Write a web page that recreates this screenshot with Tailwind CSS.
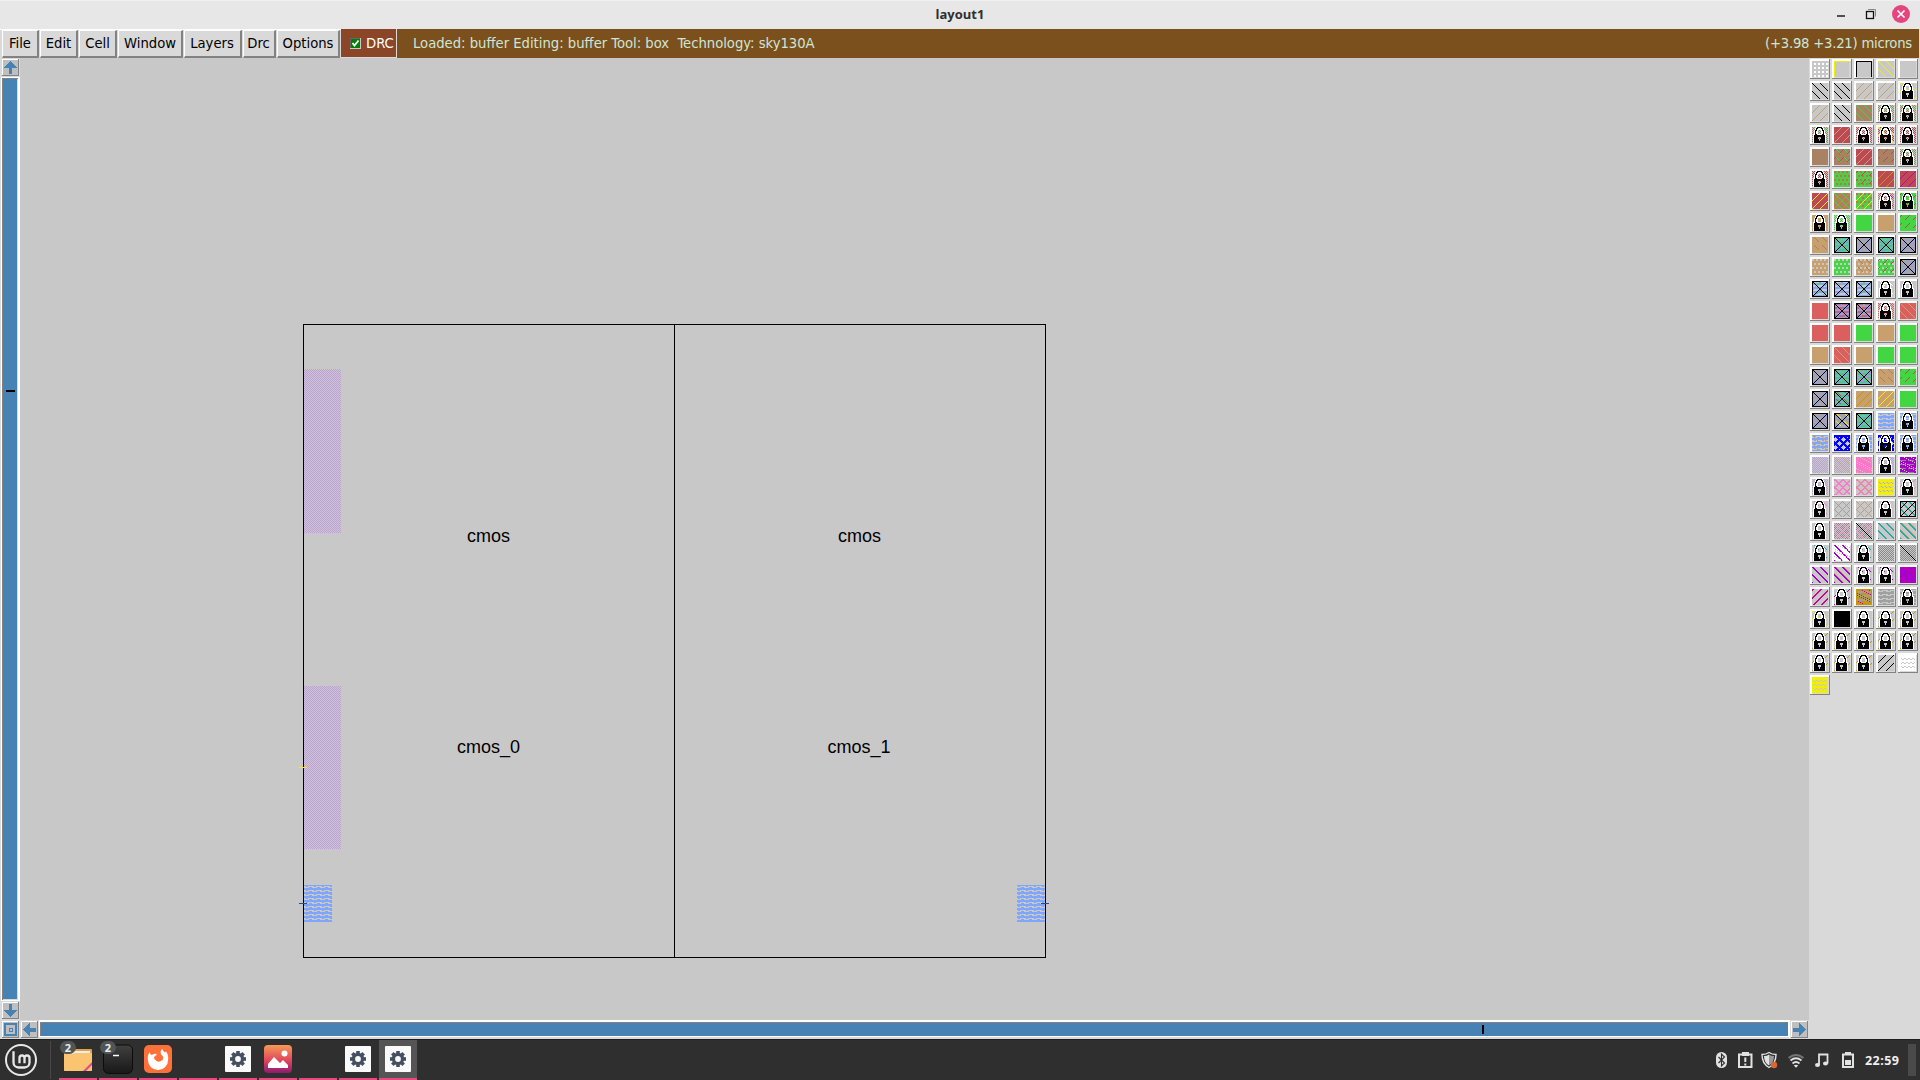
<!DOCTYPE html>
<html lang="en">
<head>
<meta charset="utf-8">
<title>layout1</title>
<script src="https://cdn.jsdelivr.net/npm/@tailwindcss/browser@4"></script>
</head>
<body class="w-[1920px] h-[1080px] overflow-hidden flex flex-col bg-[#d9d9d9] font-['DejaVu_Sans_Condensed','DejaVu_Sans',sans-serif] font-stretch-condensed text-black">

<!-- window title -->
<header class="h-[29px] shrink-0 bg-[#e7e7e7] border-t border-[#f0f0f0] grid grid-cols-[1fr_auto_1fr] items-center">
  <span></span>
  <h1 class="font-['Open_Sans','Noto_Sans',sans-serif] font-bold text-[13px] leading-none text-[#303030] font-stretch-normal pb-[2px]">layout1</h1>
  <svg class="justify-self-end" width="90" height="28" viewBox="1830 1 90 28">
    <path d="M1837 16h8" stroke="#111" stroke-width="1.4"/>
    <path d="M1868 9.5h7.5v7" fill="none" stroke="#888" stroke-width="1"/>
    <rect x="1866.5" y="11.500" width="7" height="7" fill="none" stroke="#111" stroke-width="1.3"/>
    <circle cx="1901" cy="14" r="9" fill="#e5457f"/>
    <path d="M1897.500 10.500l7 7m0-7l-7 7" stroke="#fff" stroke-width="1.600"/>
  </svg>
</header>

<!-- menu bar -->
<nav class="h-[29px] shrink-0 flex bg-[#7b501d] text-[14.67px] leading-none" id="bar">
  <div class="flex bg-[#d9d9d9] pl-[2px] gap-px pr-px border-t border-white">
    <button class="w-[37px] h-7 border-l border-t border-l-white border-t-white border-r-2 border-b-2 border-r-[#828282] border-b-[#828282]">File</button>
    <button class="w-[38px] h-7 border-l border-t border-l-white border-t-white border-r-2 border-b-2 border-r-[#828282] border-b-[#828282]">Edit</button>
    <button class="w-[38px] h-7 border-l border-t border-l-white border-t-white border-r-2 border-b-2 border-r-[#828282] border-b-[#828282]">Cell</button>
    <button class="w-[65px] h-7 border-l border-t border-l-white border-t-white border-r-2 border-b-2 border-r-[#828282] border-b-[#828282]">Window</button>
    <button class="w-[58px] h-7 pr-px border-l border-t border-l-white border-t-white border-r-2 border-b-2 border-r-[#828282] border-b-[#828282]">Layers</button>
    <button class="w-[33px] h-7 pr-px border-l border-t border-l-white border-t-white border-r-2 border-b-2 border-r-[#828282] border-b-[#828282]">Drc</button>
    <button class="w-[63px] h-7 border-l border-t border-l-white border-t-white border-r-2 border-b-2 border-r-[#828282] border-b-[#828282]">Options</button>
  </div>
  <div class="w-14 flex items-center bg-[#8b4527] text-white border-r border-b border-[#d9d9d9] pl-[9px] gap-[5px]">
    <svg width="11" height="11" viewBox="0 0 11 11"><rect width="11" height="11" fill="#c8c8c8"/><rect width="10" height="10" fill="#666"/><rect x="1" y="1" width="9" height="9" fill="#008000"/><path d="M2.500 5l2 2.500 4-5" fill="none" stroke="#fff" stroke-width="1.800"/></svg>
    <span>DRC</span>
  </div>
  <div class="flex-1 flex items-center justify-between pl-4 pr-[7px] text-[#cfe5d8] whitespace-pre border-r border-[#d9d9d9]"><span>Loaded: buffer Editing: buffer Tool: box  Technology: sky130A</span><span class="tracking-[-0.22px]">(+3.98 +3.21) microns</span></div>
</nav>

<main class="flex-1 min-h-0 flex">
  <div class="w-[1809px] grid grid-cols-[20px_1789px] grid-rows-[962px_19px]">
    <!-- vertical scrollbar -->
    <div class="bg-[#d9d9d9]">
      <svg class="block" width="20" height="962" viewBox="0 58 20 962" shape-rendering="crispEdges">
        <path d="M2 59h17v17h-17z" fill="#828282"/><path d="M2 59h16v16h-16z" fill="#fff"/><path d="M3 60h15v15h-15z" fill="#bfbfbf"/>
        <path d="M10 61l7 7h-5v6h-3v-6h-5z" fill="#4682b4"/>
        <path d="M1 77h19v924h-19z" fill="#fff"/><path d="M2 78h16v922h-16z" fill="#828282"/><path d="M3 79h15v920h-15z" fill="#4682b4"/><path d="M17 79h1v921h-15v-1h14z" fill="#d9d9d9"/>
        <path d="M6 390h9v2h-9z" fill="#000"/>
        <path d="M2 1002h17v17h-17z" fill="#828282"/><path d="M2 1002h16v16h-16z" fill="#fff"/><path d="M3 1003h15v15h-15z" fill="#bfbfbf"/>
        <path d="M10 1017l7-7h-5v-6h-3v6h-5z" fill="#4682b4"/>
      </svg>
    </div>
    <!-- layout canvas -->
    <svg class="block bg-[#c8c8c8] font-['Liberation_Sans',Arial,sans-serif] text-[18px]" width="1789" height="962" viewBox="20 58 1789 962">
      <defs>
        <pattern id="dith" width="2" height="2" patternUnits="userSpaceOnUse"><path d="M0 0h1v1h-1zM1 1h1v1h-1z" fill="#c29ee0" shape-rendering="crispEdges"/></pattern>
        <pattern id="brick" x="304" y="885" width="8" height="4" patternUnits="userSpaceOnUse"><path d="M0 0h8v1h-8zM2 1h2v1h-2zM5 2h3v1h-3zM0 3h8v1h-8z" fill="#7fa6ff" shape-rendering="crispEdges"/></pattern>
      </defs>
      <g shape-rendering="crispEdges">
        <path d="M304 369h37v164h-37zM304 686h37v163h-37z" fill="url(#dith)"/>
        <path d="M304 885h28v37h-28zM1017 885h28v37h-28z" fill="url(#brick)"/>
        <path d="M303 324h743v1h-743zM303 957h743v1h-743zM303 324h1v633h-1zM674 324h1v633h-1zM1045 324h1v633h-1z" fill="#000"/>
        <path d="M299 767h8v1h-8z" fill="#f5f000"/>
        <path d="M299 903h8v1h-8zM1041 903h8v1h-8z" fill="#1f4f9c"/>
      </g>
      <g text-anchor="middle"><text x="488.500" y="542">cmos</text><text x="859.500" y="542">cmos</text><text x="488.500" y="753">cmos_0</text><text x="859" y="753">cmos_1</text></g>
    </svg>
    <!-- horizontal scrollbar -->
    <svg class="block col-span-2" width="1809" height="19" viewBox="0 1020 1809 19" shape-rendering="crispEdges">
      <path d="M0 1020h1809v19h-1809z" fill="#d9d9d9"/>
      <path d="M2 1021h17v17h-17z" fill="#828282"/><path d="M2 1021h16v16h-16z" fill="#fff"/><path d="M3 1022h15v15h-15z" fill="#bfbfbf"/>
      <path d="M5 1024h11v11h-11z" fill="none" stroke="#4682b4" stroke-width="2"/><path d="M9 1028h3v3h-3z" fill="#bfbfbf" stroke="#4682b4"/>
      <path d="M21 1021h17v17h-17z" fill="#828282"/><path d="M21 1021h16v16h-16z" fill="#fff"/><path d="M22 1022h15v15h-15z" fill="#bfbfbf"/>
      <path d="M23 1029.500l7-7v5h6v4h-6v5z" fill="#4682b4"/>
      <path d="M39 1020h1751v18h-1751z" fill="#fff"/><path d="M40 1022h1748v14h-1748z" fill="#828282"/><path d="M41 1023h1747v13h-1747z" fill="#4682b4"/><path d="M39 1037h1750v1h-1750z" fill="#d9d9d9"/>
      <path d="M1482 1025h2v9h-2z" fill="#000"/>
      <path d="M1791 1021h17v17h-17z" fill="#828282"/><path d="M1791 1021h16v16h-16z" fill="#fff"/><path d="M1792 1022h15v15h-15z" fill="#bfbfbf"/>
      <path d="M1806 1029.500l-7-7v5h-6v4h6v5z" fill="#4682b4"/>
    </svg>
  </div>
  <!-- layer palette -->
  <aside id="palette" class="w-[111px] pl-px pt-px grid grid-cols-[repeat(5,20px)] auto-rows-[20px] gap-[2px] content-start"></aside>
</main>

<!-- desktop panel -->
<footer class="h-[41px] shrink-0 bg-[#2f2f2f] border-t border-[#1d1d1d] flex justify-between">
  <svg width="420" height="40" viewBox="0 1040 420 40">
    <defs>
      <linearGradient id="pic" x2="0" y2="1"><stop stop-color="#f59a56"/><stop offset=".55" stop-color="#e0475c"/><stop offset="1" stop-color="#8e1a70"/></linearGradient>
      <linearGradient id="term" x2="0" y2="1"><stop stop-color="#404040"/><stop offset="1" stop-color="#181818"/></linearGradient>
      <g id="gear"><rect width="26" height="26" rx="1" fill="#fafafa"/><g transform="translate(13 13)" fill="#454f61"><circle r="6.200"/><path id="t" d="M-1.800-8h3.600v16h-3.600z"/><use href="#t" transform="rotate(45)"/><use href="#t" transform="rotate(90)"/><use href="#t" transform="rotate(135)"/><circle r="2.900" fill="#fafafa"/></g></g>
    </defs>
    <circle cx="21" cy="1060" r="15" fill="none" stroke="#e8e8e8" stroke-width="2"/>
    <path d="M13.500 1052.500v10a5 5 0 0 0 5 5h6a5 5 0 0 0 5-5v-4.500a2.500 2.500 0 0 0-5 0v4m0-4a2.500 2.500 0 0 0-5 0v4" fill="none" stroke="#e8e8e8" stroke-width="2.300" stroke-linecap="square"/>
    <path d="M50.500 1041v38" stroke="#484848"/>
    <path d="M64 1050q0-1 1-1h26q1 0 1 1v20q0 1-1 1h-26q-1 0-1-1z" fill="#e1a049"/><path d="M66 1051h24v4h-24z" fill="#eee"/><path d="M64 1054h9l2-1h17v17q0 1-1 1h-26q-1 0-1-1z" fill="#fac470"/><path d="M83 1071l9-9v3l-6 6z" fill="#e8468a"/>
    <rect x="103.500" y="1045" width="29" height="28.500" rx="5" fill="url(#term)" stroke="#0c0c0c"/><path d="M108 1052l2 1.500M113 1055.500h6" stroke="#fff" stroke-width="1.300"/>
    <rect x="144" y="1045" width="28" height="28" rx="5" fill="#ff7139"/>
    <path d="M150 1052q0 3 2 3 2-2 5-1-1 2-3 3 0 3 3 3.500 3 1 5-1 1-3-1-5-1-3 1-6 1 3 3 4l1-1q3 4 2 9a10 9.500 0 0 1-20 0q-1-5 2-8.500z" fill="#fff"/><path d="M155 1059q2 4 6 2 4-2 1-6-2-1-3 0 2 2 0 4-2 1-4 0z" fill="#ff7139"/>
    <use href="#gear" x="225" y="1046"/>
    <rect x="264" y="1045" width="28" height="28" rx="4" fill="url(#pic)"/><circle cx="284.500" cy="1053.500" r="3" fill="#fff"/><path d="M268 1068v-4l6-7 6 6 3-3 5 5v3z" fill="#fff"/>
    <use href="#gear" x="345" y="1046"/>
    <path d="M379 1040h38v40h-38z" fill="#555"/>
    <use href="#gear" x="385" y="1046"/>
    <g fill="#505558"><rect x="60" y="1041" width="16" height="13" rx="6.500"/><rect x="100" y="1041" width="16" height="13" rx="6.500"/></g>
    <g class="font-['Noto_Sans',sans-serif] text-[11px] font-bold font-stretch-normal" fill="#e4ecef" text-anchor="middle"><text x="68" y="1051.500">2</text><text x="108" y="1051.500">2</text></g>
    <path d="M59 1078h38v2h-38zM99 1078h38v2h-38zM139 1078h38v2h-38zM179 1078h38v2h-38zM219 1078h38v2h-38zM259 1078h38v2h-38zM299 1078h38v2h-38zM339 1078h38v2h-38zM379 1078h38v2h-38z" fill="#e54980"/>
  </svg>
  <svg width="220" height="40" viewBox="1700 1040 220 40" fill="none" stroke="#e2e2e2">
    <rect x="1716" y="1052" width="11" height="16" rx="5.500" fill="#e2e2e2" stroke="none"/><path d="M1718.500 1057l6 6-3 3v-12l3 3-6 6" stroke="#2f2f2f" stroke-width="1.100"/>
    <path d="M1739 1054.500h12.500v12.500h-12.500z" stroke-width="2"/><path d="M1742 1052h7v4h-7z" fill="#e2e2e2" stroke="none"/><path d="M1745.300 1057.500v4.500m0 1.500v2" stroke-width="2"/>
    <path d="M1769 1052.500q3 2 7 2 0 9-7 13-7-4-7-13 4 0 7-2z" stroke-width="1.400"/><path d="M1769 1054.500v11q-5-3-5-9.500 3 0 5-1.500z" fill="#e2e2e2" stroke="none"/><path d="M1769 1054.500v11q5-3 5-9.500-3 0-5-1.500z" fill="#999" stroke="none"/><circle cx="1774" cy="1065" r="3.200" fill="#e0662f" stroke="none"/>
    <path d="M1788.500 1058q7.500-6 15 0" stroke="#777" stroke-width="2"/><path d="M1790.500 1060.500q5.500-4.500 11 0M1792.500 1063.500q3.500-3 7 0" stroke-width="1.700"/><path d="M1793.800 1065.500q2.200-1.500 4.400 0l-2.200 2.300z" fill="#e2e2e2" stroke="none"/>
    <path d="M1819 1065v-10.500h8.500v9" stroke-width="1.800"/><ellipse cx="1817.500" cy="1065" rx="2.500" ry="2" fill="#e2e2e2" stroke="none"/><ellipse cx="1825.500" cy="1063.500" rx="2.500" ry="2" fill="#e2e2e2" stroke="none"/>
    <path d="M1843 1054.500h10v12.500h-10z" stroke-width="2"/><path d="M1845 1052h6v2h-6zM1845 1060h6v5h-6z" fill="#e2e2e2" stroke="none"/>
    <text x="1865" y="1064.500" textLength="34" class="font-['Noto_Sans',sans-serif] font-bold text-[12.500px] font-stretch-normal" fill="#f0f0f0" stroke="none">22:59</text>
    <path d="M1908 1044h8v32h-8z" fill="#4a4a4a" stroke="none"/>
  </svg>
</footer>

<script>
const C = {_:'#c8c8c8', w:'#ffffff', y:'#f0f000', k:'#000000', t:'#c8a06e', n:'#a88262', r:'#bb4a55', s:'#dc5f5f', g:'#42d642',
  b:'#7fa6ff', d:'#0000ff', v:'#b9a2d4', p:'#ff78c8', u:'#a800c8', c:'#28a8a0', o:'#c89600', a:'#a0a0a0', e:'#8a8a8a', m:'#d00096'};
// stipples: (x, y) => is the pixel painted
const stag = (x,y) => y%4<2 && (x+(y%8<4?0:2))%4<2;
const S = {
  s: () => true,
  h: (x,y) => (x+y)%2===0,
  b: (x,y) => (x-y+16)%8===0,
  D: (x,y) => (x-y+16)%8===2,
  f: (x,y) => (x+y)%8===7,
  W: (x,y) => (x-y+16)%8<2,
  V: (x,y) => (x+y)%8<2,
  B: (x,y) => (x-y+16)%8===2 && y%8<5,
  F: (x,y) => (x+y)%8===1 && y%8<5,
  o: (x,y) => x%4>1 && y%4>1,
  i: stag,
  q: (x,y) => x===0 || y===0 || x===15 || y===15 || !((y+1)%4<2 && (x+(y%8<4?0:2))%4<2),
  Q: (x,y) => y<2 || y>13 || stag(x,y),
  U: (x,y) => y<1 || x<1 || x>14,
  R: (x,y) => y<1 || x<1 || x>14 || y>14,
  w: (x,y) => y%4===0 || y%4===3 || (y%4===1 ? x%8>1&&x%8<4 : x%8>4),
  z: (x,y) => y%4<2 && (x+y)%8>0,
  Z: (x,y) => y%4===3 && x%8<6,
  x: (x,y) => (x-y+16)%8===0 || (x+y)%8===0,
  N: (x,y) => (x-y+16)%8<2 || (x+y)%8<2,
  j: (x,y) => (x*3+y*5)%11<2 && (x+y)%3>0,
  l: (x,y) => x===y,
  X: (x,y) => x===0||y===0||x===15||y===15||x===y||x===15-y,
  M: (x,y) => y<2||y>14||(x-y+16)%8<3||(x+y)%8<3
};
const LOCK = [
'....wkkkkkw.....',
'...wkkwwwkkw....',
'...wkwwwwwkw....',
'..wkkw...wkkw...',
'..wkww...wwkw...',
'..wkww...wwkw...',
'..wkww...wwkw...',
'.wwkkwwwwwkkww..',
'.wkkkkkkkkkkkw..',
'.wkkkkkkkkkkkw..',
'.wkkkk...kkkkw..',
'.wkkkk...kkkkw..',
'.wkkkkk.kkkkkw..',
'.wkkkkk.kkkkkw..',
'.wkkkkkkkkkkkw..',
'.wkkkkkkkkkkkw..'];
const rows = [
 'ow|Uy|Uk|by|',
 'bk|bk|ft|ft|by L',
 'ft|bk|sn bg|hn Bg L|hn Bg L',
 'hn Bg L|sr ft|hr L|hr by L|hr L',
 'sn|sn Bg Fr|sr ft|sn Fr|hn Bg L',
 'hr L|sg is|sg is Fr|sr fo|sr fm',
 'sr fy|sn fo bg|sg is fy|hn Bm L|sg Fr L',
 'st L|hg L|sg|st|sg Fr',
 'st Bn|sb zg X|sb zt X|sb zg X|sb zt X',
 'st i_|sg i_|st i_ Bn|sg i_ Fr|sb zt X',
 'sb z_ Fg X|sb z_ Ft X|sb z_ Fg X|Bw L|L',
 'ss|sb zs X|sb zs Ft X|hs L|ss bt',
 'ss|ss|sg|st|sg',
 'st|ss bt|st|sg|sg',
 'sb zt X|sb zg X|sb zg Bp X|st Bn|sg Fr',
 'sb zt X|sb zg Br X|st fo|st fy|sg',
 'sb zt X|sb zt By X|sb zg X|wb|wb L',
 'wb bt|Md|wb L|Md L|wb L',
 'hv|hv bt|sp j_|hv L|su Ze j_',
 'hv L|Np|Np bt|hv qy|fp L',
 'Bp L|xa|xa bt|L|Wc fk Rk',
 'L|he xp|he xp lk|Wc|Wc Dt',
 'Bc L|sw Wu j_|Bc L|he|he lk',
 'Wu|Wu Dt|Bu L|Bu L|su jm',
 'Vm|fm L|sa Qo zo jm Ro|wa|wa L',
 'by L|sk|L|fo L|fo L',
 'fo L|fo L|fo L|fo L|fo L',
 'fo L|fo L|fo L|fk|qw',
 'qy'];
function swatch(spec) {
  const g = Array.from({length:16}, () => Array(16).fill(C._));
  for (const l of spec.split(' ').filter(Boolean)) {
    if (l === 'L') LOCK.forEach((r,y) => [...r].forEach((c,x) => { if (c !== '.') g[y][x] = C[c]; }));
    else for (let y=0;y<16;y++) for (let x=0;x<16;x++) if (S[l[0]](x,y)) g[y][x] = C[l[1]||'k'];
  }
  let out = '';
  g.forEach((r,y) => { for (let x=0;x<16;) { let e=x; while (e<16 && r[e]===r[x]) e++; out += `<path d="M${x+2} ${y+2}h${e-x}v1h${x-e}z" fill="${r[x]}"/>`; x=e; } });
  return `<svg width="20" height="20" shape-rendering="crispEdges"><path d="M0 0h20v20h-20z" fill="#828282"/><path d="M0 0h19v19h-19z" fill="#fff"/><path d="M2 2h17v17h-17z" fill="#d9d9d9"/>${out}</svg>`;
}
document.getElementById('palette').innerHTML = rows.flatMap(r => r.split('|')).map(swatch).join('');
</script>
</body>
</html>
